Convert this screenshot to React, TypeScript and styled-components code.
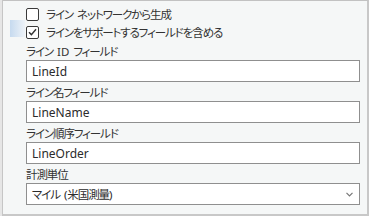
import React from "react";
import styled, { createGlobalStyle } from "styled-components";

const Global = createGlobalStyle`
  html, body { margin: 0; padding: 0; background: #f5f7f7; }
  * { box-sizing: border-box; }
`;

const Frame = styled.div`
  display: flex;
  width: 369px;
  height: 216px;
  font-family: "Noto Sans", "Noto Sans CJK JP", sans-serif;
  font-feature-settings: "palt";
  color: #333;
`;

const Gutter = styled.div`
  width: 3px;
  background: #e6e6e6;
  border-right: 1px solid #c6c6c6;
`;

const Panel = styled.div`
  flex: 1;
  background: #f5f7f7;
  border-top: 1px solid #c2c2c2;
  border-right: 2px solid #c8c8c8;
  border-bottom: 2px solid #c8c8c8;
  padding: 4px 7px 0 23px;
  display: flex;
  flex-direction: column;
`;

const CheckRow = styled.label<{ $active?: boolean }>`
  position: relative;
  display: flex;
  align-items: center;
  height: 18px;
  gap: 7px;
  &::before {
    content: "";
    display: ${(p) => (p.$active ? "block" : "none")};
    position: absolute;
    left: -16px;
    top: -3px;
    width: 15px;
    height: 17px;
    background: linear-gradient(to right, #c6daef, #eef3f8);
  }
`;

const Box = styled.span`
  width: 13px;
  height: 13px;
  border: 1px solid #3a3a3a;
  border-radius: 2px;
  background: #fff;
  display: flex;
  align-items: center;
  justify-content: center;
`;

const Jp = styled.span`
  font-size: 11.5px;
  letter-spacing: -1.1px;
`;

const Gap = styled.span`
  display: inline-block;
  width: 4px;
`;

const Label = styled.div`
  height: 19px;
  display: flex;
  align-items: center;
`;

const Field = styled.div`
  height: 22px;
  border: 1px solid #8f8f8f;
  background: #fff;
  display: flex;
  align-items: center;
  padding: 0 6px 0 5px;
  font-size: 12px;
  color: #2b2b2b;
`;

const Value = styled.span`
  flex: 1;
`;

const Latin = styled.span`
  letter-spacing: 0;
`;

const Check = ({ checked, active, children }: { checked?: boolean; active?: boolean; children: React.ReactNode }) => (
  <CheckRow $active={active}>
    <Box>
      {checked && (
        <svg width="9" height="8" viewBox="0 0 9 8">
          <path d="M1 4.2 L3.4 6.6 L8 1.2" fill="none" stroke="#333" strokeWidth="1.4" />
        </svg>
      )}
    </Box>
    <Jp>{children}</Jp>
  </CheckRow>
);

export default function App() {
  return (
    <>
      <Global />
      <Frame>
        <Gutter />
        <Panel>
          <Check>ライン<Gap />ネットワークから生成</Check>
          <Check checked active>ラインをサポートするフィールドを含める</Check>
          <Label><Jp>ライン<Gap /><Latin>ID</Latin><Gap />フィールド</Jp></Label>
          <Field><Value>LineId</Value></Field>
          <Label><Jp>ライン名フィールド</Jp></Label>
          <Field><Value>LineName</Value></Field>
          <Label><Jp>ライン順序フィールド</Jp></Label>
          <Field><Value>LineOrder</Value></Field>
          <Label><Jp>計測単位</Jp></Label>
          <Field>
            <Value><Jp>マイル<Gap /><Latin>(</Latin>米国測量<Latin>)</Latin></Jp></Value>
            <svg width="7" height="5" viewBox="0 0 7 5">
              <path d="M0.5 0.8 L3.5 3.8 L6.5 0.8" fill="none" stroke="#777" strokeWidth="1.2" />
            </svg>
          </Field>
        </Panel>
      </Frame>
    </>
  );
}
